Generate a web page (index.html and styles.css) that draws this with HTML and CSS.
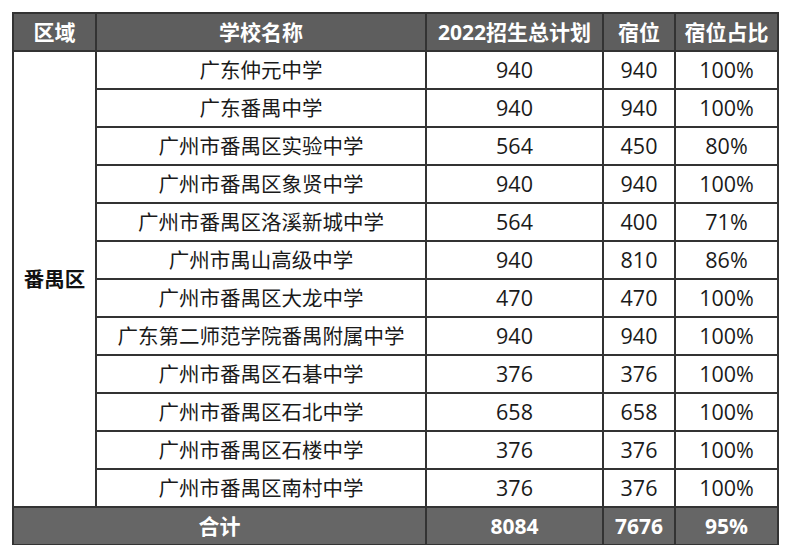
FILE: index.html
```html
<!DOCTYPE html>
<html lang="zh-CN">
<head>
<meta charset="utf-8">
<link rel="stylesheet" href="styles.css">
</head>
<body>
<table class="tbl">
  <colgroup>
    <col class="c1"><col class="c2"><col class="c3"><col class="c4"><col class="c5">
  </colgroup>
  <thead>
    <tr class="head"><th>区域</th><th>学校名称</th><th>2022招生总计划</th><th>宿位</th><th>宿位占比</th></tr>
  </thead>
  <tbody>
    <tr><td class="area" rowspan="12">番禺区</td><td>广东仲元中学</td><td class="num">940</td><td class="num">940</td><td class="num">100%</td></tr>
    <tr><td>广东番禺中学</td><td class="num">940</td><td class="num">940</td><td class="num">100%</td></tr>
    <tr><td>广州市番禺区实验中学</td><td class="num">564</td><td class="num">450</td><td class="num">80%</td></tr>
    <tr><td>广州市番禺区象贤中学</td><td class="num">940</td><td class="num">940</td><td class="num">100%</td></tr>
    <tr><td>广州市番禺区洛溪新城中学</td><td class="num">564</td><td class="num">400</td><td class="num">71%</td></tr>
    <tr><td>广州市禺山高级中学</td><td class="num">940</td><td class="num">810</td><td class="num">86%</td></tr>
    <tr><td>广州市番禺区大龙中学</td><td class="num">470</td><td class="num">470</td><td class="num">100%</td></tr>
    <tr><td>广东第二师范学院番禺附属中学</td><td class="num">940</td><td class="num">940</td><td class="num">100%</td></tr>
    <tr><td>广州市番禺区石碁中学</td><td class="num">376</td><td class="num">376</td><td class="num">100%</td></tr>
    <tr><td>广州市番禺区石北中学</td><td class="num">658</td><td class="num">658</td><td class="num">100%</td></tr>
    <tr><td>广州市番禺区石楼中学</td><td class="num">376</td><td class="num">376</td><td class="num">100%</td></tr>
    <tr><td>广州市番禺区南村中学</td><td class="num">376</td><td class="num">376</td><td class="num">100%</td></tr>
  </tbody>
  <tfoot>
    <tr class="foot"><td colspan="2">合计</td><td class="num">8084</td><td class="num">7676</td><td class="num">95%</td></tr>
  </tfoot>
</table>
</body>
</html>
```
FILE: styles.css
```css
html, body {
  margin: 0;
  padding: 0;
  background: #ffffff;
}
body {
  padding: 12px 0 0 12px;
  font-family: "Open Sans", "Noto Sans CJK SC", sans-serif;
  color: #1a1a1a;
}
.tbl {
  border-collapse: collapse;
  table-layout: fixed;
  width: 765px;
  border: 2px solid #2e2e2e;
}
.c1 { width: 83px; }
.c2 { width: 330px; }
.c3 { width: 177px; }
.c4 { width: 72px; }
.c5 { width: 103px; }
.tbl th, .tbl td {
  border: 2px solid #333333;
  text-align: center;
  vertical-align: middle;
  padding: 0;
  height: 36px;
  line-height: 36px;
  white-space: nowrap;
}
.tbl td {
  font-size: 20.5px;
  font-weight: 400;
}
.tbl td.num {
  font-size: 21.5px;
}
.head th {
  background: #5e5e5e;
  color: #ffffff;
  font-size: 21px;
  font-weight: 700;
}
.tbl td.area {
  font-weight: 700;
  font-size: 20.5px;
  color: #111111;
}
.foot td,
.foot td.num {
  background: #666666;
  color: #ffffff;
  font-weight: 700;
  font-size: 21px;
}
```
